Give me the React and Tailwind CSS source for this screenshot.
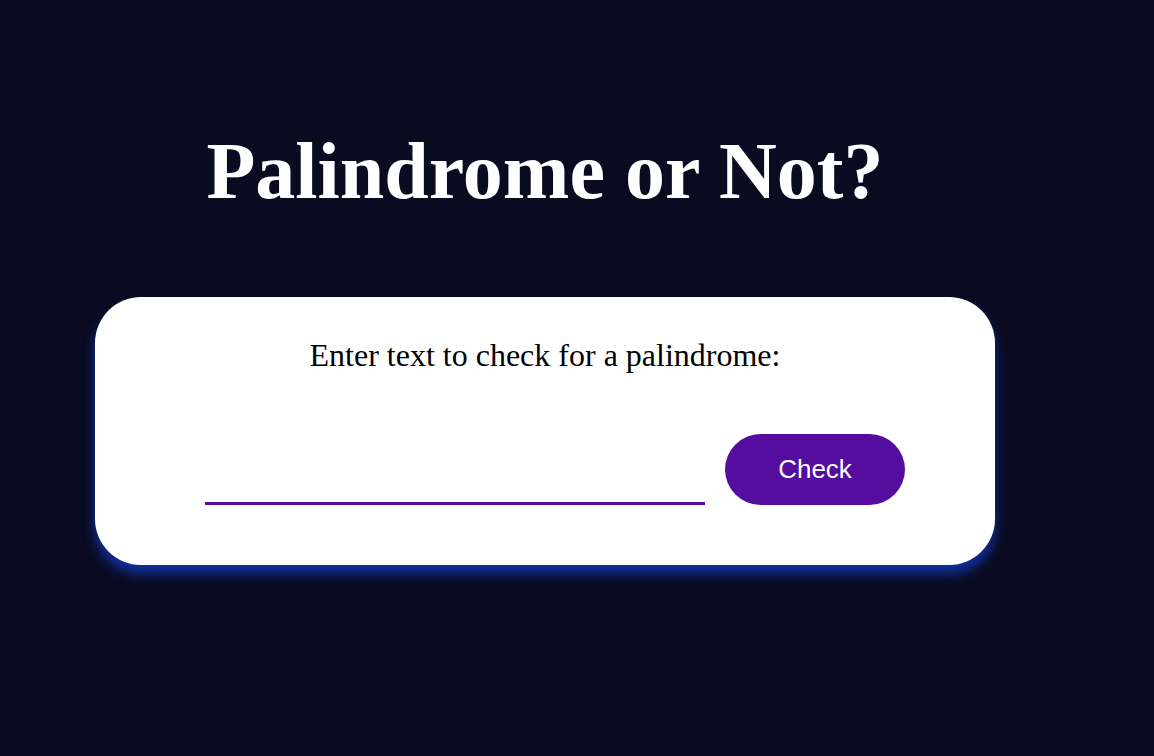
import React, { useState } from "react";

function App() {
  const [text, settext] = useState("");

  return (
    <div className="min-h-[756px] bg-[#0a0b21] pt-[116px]">
      <div className="ml-[95px] w-[900px]">
        <h1 className="text-center text-white font-bold text-[80px] leading-[110px] font-['Liberation_Serif',serif]">
          Palindrome or Not?
        </h1>

        <div className="mt-[71px] h-[268px] rounded-[46px] bg-white shadow-[0_9px_12px_#10309e] pt-[40px] font-['Liberation_Serif',serif]">
          <p className="text-center text-black text-[32px] leading-[36px]">
            Enter text to check for a palindrome:
          </p>

          <div className="mt-[61px] ml-[110px] flex items-end gap-5">
            <input
              value={text}
              onChange={(e) => settext(e.target.value)}
              className="w-[500px] h-[40px] border-b-[3px] border-[#540d9e] outline-none text-xl"
            />
            <button className="w-[180px] h-[71px] rounded-[36px] bg-[#540d9e] text-white text-[26px] font-['Liberation_Sans',sans-serif]">
              Check
            </button>
          </div>
        </div>
      </div>
    </div>
  );
}

export default App;
